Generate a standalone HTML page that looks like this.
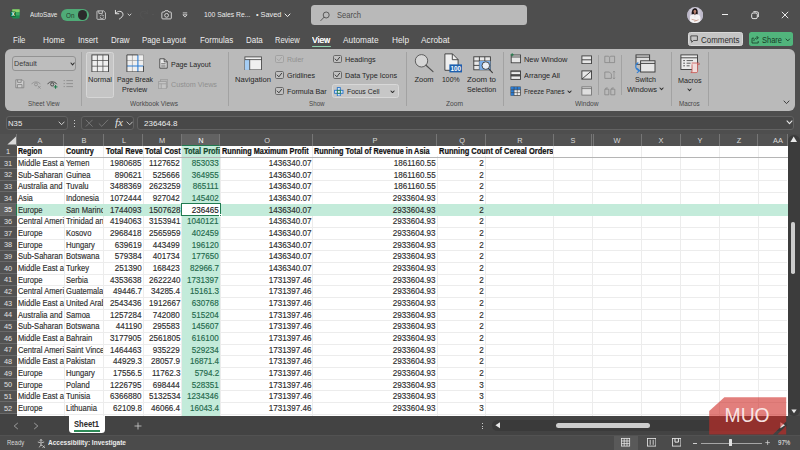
<!DOCTYPE html>
<html lang="en">
<head>
<meta charset="utf-8">
<title>100 Sales Records - Excel</title>
<style>
*{margin:0;padding:0;box-sizing:border-box}
html,body{width:800px;height:450px;overflow:hidden;background:#4e4e4e;font-family:"Liberation Sans",sans-serif;}
body{position:relative}
.abs{position:absolute}
.t{position:absolute;white-space:nowrap;line-height:1;transform-origin:0 0}
.sep{position:absolute;width:1px;background:#a2a2a2}
.cb{position:absolute;width:8.4px;height:8px;border:0.9px solid #6a6a6a;border-radius:1.7px;background:#c1c1c1}
.cb.dim{border-color:#a2a2a2;background:#bdbdbd}
.ch{position:absolute;border-right:1px solid #767676}
.rh{position:absolute;left:0;width:16.5px;background:#525252;border-bottom:1px solid #6a6a6a}
.vl{position:absolute;width:1px;background:#ececec}
.hl{position:absolute;left:16.5px;width:770.9px;height:1px;background:#ececec}
.c{position:absolute;height:11.67px;white-space:nowrap;overflow:hidden;transform-origin:0 0;font-size:8.6px;line-height:11.67px;color:#2e2e2e}
.c span{position:absolute;top:0.6px;white-space:nowrap;-webkit-text-stroke:0.15px currentColor}
</style>
</head>
<body>
<!-- ================= TITLE BAR ================= -->
<div id="title">
<svg class="abs" style="left:10px;top:9.4px" width="10" height="9.8" viewBox="0 0 11 11" ><rect x="2.4" y="0.3" width="8.3" height="10.4" rx="1.1" fill="#1f8a50"/>
<rect x="2.4" y="0.3" width="8.3" height="3.5" fill="#8fd26a"/><rect x="2.4" y="3.8" width="8.3" height="3.4" fill="#3cae63"/>
<rect x="0.2" y="2.8" width="6.2" height="6.2" rx="0.9" fill="#0f6e3b"/>
<text x="3.3" y="7.9" font-family="Liberation Sans, sans-serif" font-size="5.4" font-weight="bold" fill="#fff" text-anchor="middle">X</text></svg>
<div class="t" style="left:29.60px;top:11.40px;font-size:7.8px;color:#ececec;transform:scaleX(0.810);">AutoSave</div>
<div class="abs" style="left:61.00px;top:9.00px;width:27.60px;height:12.00px;background:#4fab77;border-radius:6px"></div>
<div class="t" style="left:66.00px;top:11.57px;font-size:7.6px;color:#1f3b2b;transform:scaleX(0.828);">On</div>
<div class="abs" style="left:77.60px;top:10.40px;width:9.80px;height:9.40px;background:#2b2b2b;border-radius:5px"></div>
<svg class="abs" style="left:95.8px;top:9.6px" width="10.4" height="10.2" viewBox="0 0 12 12" ><g fill="none" stroke="#e4e4e4" stroke-width="0.9"><path d="M1 2 a1 1 0 0 1 1-1 h6.8 l2.2 2.2 v6.8 a1 1 0 0 1 -1 1 h-8 a1 1 0 0 1 -1 -1z"/>
<path d="M3.2 1.2 v2.8 h4.2 v-2.8"/><path d="M4.6 7.4 a2.1 2.1 0 0 1 3.8 -0.6 M8.6 6 v1 h-1 M8.9 8.6 a2.1 2.1 0 0 1 -3.8 0.6 M4.9 10 v-1 h1" stroke-width="0.7"/></g></svg>
<svg class="abs" style="left:113.6px;top:9px" width="11.2" height="11" viewBox="0 0 13 13" ><g fill="none" stroke="#e8e8e8" stroke-width="1.1" stroke-linecap="round" stroke-linejoin="round"><path d="M1.6 1.6 v4 h4"/><path d="M1.9 5.3 c2.2-3.8 8.2-3.4 8.6 0.9 c0.2 2.3-1.6 3.7-4.2 5.6"/></g></svg>
<svg class="abs" style="left:126.7px;top:12.6px" width="5" height="3.6" viewBox="0 0 5 3.6" ><path d="M1 1 L2.5 2.6 L4 1" fill="none" stroke="#e0e0e0" stroke-width="0.85" stroke-linecap="round" stroke-linejoin="round"/></svg>
<svg class="abs" style="left:138.4px;top:9px" width="11.2" height="11" viewBox="0 0 13 13" ><g fill="none" stroke="#545454" stroke-width="1.1" stroke-linecap="round" stroke-linejoin="round"><path d="M11.4 1.6 v4 h-4"/><path d="M11.1 5.3 c-2.2-3.8-8.2-3.4-8.6 0.9 c-0.2 2.3 1.6 3.7 4.2 5.6"/></g></svg>
<div class="abs" style="left:152.00px;top:14.40px;width:2.40px;height:0.80px;background:#545454;"></div>
<svg class="abs" style="left:161.4px;top:10.2px" width="11.2" height="10" viewBox="0 0 12 11" ><g fill="none" stroke="#e6e6e6" stroke-width="0.95"><path d="M0.8 3.2 a1 1 0 0 1 1-1 h1.7 l0.9-1.4 h3.2 l0.9 1.4 h1.7 a1 1 0 0 1 1 1 v5.6 a1 1 0 0 1 -1 1 h-8.4 a1 1 0 0 1 -1-1z"/><circle cx="6" cy="5.9" r="2.1"/></g></svg>
<svg class="abs" style="left:181.5px;top:12px" width="6" height="6" viewBox="0 0 6 6" ><g fill="none" stroke="#e6e6e6" stroke-width="0.8"><path d="M0.8 0.9 h4.4"/><path d="M0.9 2.8 l2.1 2.3 l2.1 -2.3z"/></g></svg>
<div class="t" style="left:203.60px;top:11.31px;font-size:7.9px;color:#ececec;transform:scaleX(0.860);">100 Sales Re...</div>
<div class="t" style="left:255.60px;top:11.31px;font-size:7.9px;color:#ececec;transform:scaleX(0.929);">• Saved</div>
<svg class="abs" style="left:283.7px;top:13.1px" width="7" height="4.6" viewBox="0 0 7 4.6" ><path d="M1 1 L3.5 3.6 L6 1" fill="none" stroke="#efefef" stroke-width="1.0" stroke-linecap="round" stroke-linejoin="round"/></svg>
<div class="abs" style="left:311.40px;top:5.20px;width:215.80px;height:19.80px;background:#b9b9b9;border-radius:3.5px"></div>
<svg class="abs" style="left:319.5px;top:10.5px" width="10.5" height="10.5" viewBox="0 0 10.5 10.5" ><g fill="none" stroke="#484848" stroke-width="0.85"><circle cx="6.2" cy="4" r="3"/><path d="M4.1 6.2 L0.8 9.6" stroke-linecap="round"/></g></svg>
<div class="t" style="left:337.00px;top:10.89px;font-size:8.4px;color:#4c4c4c;transform:scaleX(0.904);">Search</div>
<svg class="abs" style="left:687.1px;top:6.9px" width="16.2" height="16.2" viewBox="0 0 16.2 16.2" ><defs><clipPath id="avc"><circle cx="8.1" cy="8.1" r="8"/></clipPath></defs>
<g clip-path="url(#avc)"><rect width="16.2" height="16.2" fill="#cdc9d8"/>
<rect x="0" y="0" width="2.6" height="16.2" fill="#b9b5c6"/><rect x="13.4" y="0" width="2.8" height="16.2" fill="#bdb9ca"/>
<path d="M4.7 7.6 C4.3 3.2 6.2 1.2 7.9 1.2 C9.9 1.2 11.2 3 10.6 7.6 Z" fill="#1d1618"/>
<ellipse cx="7.9" cy="4.5" rx="1.35" ry="1.75" fill="#b9826f"/>
<path d="M7.2 6 h1.4 v1.6 h-1.4z" fill="#a87463"/>
<path d="M3 16.2 V10 C3 8.2 5 7.4 6.8 7.3 L7.9 8.6 L9 7.3 C11 7.4 13.2 8.4 13.4 10.4 V16.2 Z" fill="#f4f2f3"/>
<path d="M4.6 12.3 l5.2 1.4 M11.6 12.8 l-4.4 1.5" stroke="#c9a293" stroke-width="0.9" fill="none"/>
<path d="M7.9 8.6 v2.2" stroke="#d9d4d6" stroke-width="0.5"/></g></svg>
<div class="abs" style="left:722.00px;top:14.00px;width:6.40px;height:0.90px;background:#efefef;"></div>
<svg class="abs" style="left:750.5px;top:11px" width="8.5" height="8.5" viewBox="0 0 8.5 8.5" ><g fill="none" stroke="#efefef" stroke-width="0.95"><rect x="0.7" y="2" width="5.6" height="5.6" rx="1.4"/><path d="M2.4 0.7 h3.2 a2.1 2.1 0 0 1 2.1 2.1 v3.2"/></g></svg>
<svg class="abs" style="left:781px;top:11px" width="8" height="8" viewBox="0 0 8 8" ><path d="M0.8 0.8 L7.2 7.2 M7.2 0.8 L0.8 7.2" fill="none" stroke="#efefef" stroke-width="0.95"/></svg>
</div>
<!-- ================= TABS ================= -->
<div id="tabs">
<div class="t" style="left:13.00px;top:35.97px;font-size:8.3px;color:#ededed;transform:scaleX(0.927);">File</div>
<div class="t" style="left:42.60px;top:35.97px;font-size:8.3px;color:#ededed;transform:scaleX(0.985);">Home</div>
<div class="t" style="left:77.60px;top:35.97px;font-size:8.3px;color:#ededed;transform:scaleX(0.963);">Insert</div>
<div class="t" style="left:111.00px;top:35.97px;font-size:8.3px;color:#ededed;transform:scaleX(0.960);">Draw</div>
<div class="t" style="left:142.40px;top:35.97px;font-size:8.3px;color:#ededed;transform:scaleX(0.944);">Page Layout</div>
<div class="t" style="left:200.00px;top:35.97px;font-size:8.3px;color:#ededed;transform:scaleX(0.960);">Formulas</div>
<div class="t" style="left:245.60px;top:35.97px;font-size:8.3px;color:#ededed;transform:scaleX(0.958);">Data</div>
<div class="t" style="left:275.00px;top:35.97px;font-size:8.3px;color:#ededed;transform:scaleX(0.904);">Review</div>
<div class="t" style="left:343.00px;top:35.97px;font-size:8.3px;color:#ededed;">Automate</div>
<div class="t" style="left:391.60px;top:35.97px;font-size:8.3px;color:#ededed;transform:scaleX(0.995);">Help</div>
<div class="t" style="left:421.00px;top:35.97px;font-size:8.3px;color:#ededed;">Acrobat</div>
<div class="t" style="left:312.40px;top:35.97px;font-size:8.3px;color:#fff;transform:scaleX(1.009);text-shadow:0.35px 0 0 #fff;">View</div>
<div class="abs" style="left:312.40px;top:45.60px;width:18.60px;height:1.60px;background:#8fd1ae;border-radius:0.8px"></div>
<div class="abs" style="left:687.60px;top:32.00px;width:55.80px;height:14.40px;background:#c5c5c5;border-radius:2.5px;border:0.6px solid #d8d8d8"></div>
<svg class="abs" style="left:690px;top:35.2px" width="8.4" height="8" viewBox="0 0 8.4 8" ><path d="M0.8 0.9 h6.6 v4.6 h-3.8 l-1.9 1.8 v-1.8 h-0.9z" fill="none" stroke="#333" stroke-width="0.8" stroke-linejoin="round"/></svg>
<div class="t" style="left:701.00px;top:35.57px;font-size:8.3px;color:#2c2c2c;transform:scaleX(0.957);">Comments</div>
<div class="abs" style="left:748.60px;top:32.00px;width:44.00px;height:14.40px;background:#51b57c;border-radius:2.5px"></div>
<svg class="abs" style="left:751px;top:34.8px" width="9" height="9" viewBox="0 0 9 9" ><g fill="none" stroke="#173a27" stroke-width="0.8" stroke-linejoin="round"><path d="M3 3.2 h-2 v4.8 h6.2 v-2"/><path d="M2.8 6 c0.3-2.3 1.8-3.2 4.2-3.2 M5.6 1 l1.8 1.8 l-1.8 1.8"/></g></svg>
<div class="t" style="left:762.00px;top:35.57px;font-size:8.3px;color:#173a27;transform:scaleX(0.903);">Share</div>
<svg class="abs" style="left:785.2px;top:37.65px" width="5.6" height="3.9" viewBox="0 0 5.6 3.9" ><path d="M1 1 L2.8 2.9 L4.6 1" fill="none" stroke="#173a27" stroke-width="0.85" stroke-linecap="round" stroke-linejoin="round"/></svg>
</div>
<!-- ================= RIBBON ================= -->
<div id="ribbon">
<div class="abs" style="left:5.00px;top:48.80px;width:790.00px;height:61.80px;background:#bababa;border-radius:6px"></div>
<div class="abs" style="left:12.40px;top:56.40px;width:63.60px;height:14.40px;background:#bdbdbd;border:0.8px solid #939393;border-radius:3px"></div>
<div class="t" style="left:14.20px;top:60.23px;font-size:8px;color:#3a3a3a;transform:scaleX(0.899);">Default</div>
<svg class="abs" style="left:70.0px;top:62.1px" width="5.2" height="3.8" viewBox="0 0 5.2 3.8" ><path d="M1 1 L2.6 2.8 L4.2 1" fill="none" stroke="#2e2e2e" stroke-width="1.1" stroke-linecap="round" stroke-linejoin="round"/></svg>
<svg class="abs" style="left:15.4px;top:79px" width="9.6" height="9.6" viewBox="0 0 9.6 9.6" ><g fill="none" stroke="#7c7c7c" stroke-width="0.8"><path d="M0.8 0.8 h6.4 l1.6 1.6 v6.4 h-8z" fill="#cdcdcd"/><path d="M2.6 0.8 v2.6 h3.6 v-2.6 M2.4 8.8 v-3.2 h4.6 v3.2"/></g></svg>
<svg class="abs" style="left:31.2px;top:79.6px" width="11" height="9.6" viewBox="0 0 11 9.6" ><g fill="none" stroke="#8c8c8c" stroke-width="0.8"><path d="M0.6 4.2 c1.6-3 7-3 8.8 0"/><circle cx="5" cy="4.4" r="1.5"/><path d="M7 6 l2.6 2.6 M9.6 6 l-2.6 2.6"/></g></svg>
<svg class="abs" style="left:47.2px;top:79.6px" width="11.4" height="9.6" viewBox="0 0 11.4 9.6" ><g fill="none" stroke="#3a3a3a" stroke-width="0.85"><path d="M0.6 4.2 c1.6-3.2 7.4-3.2 9.2 0"/><circle cx="5.2" cy="4.4" r="1.6"/><path d="M8.6 5 v3.8 M6.7 6.9 h3.8" stroke="#1e7a4a" stroke-width="1"/></g></svg>
<svg class="abs" style="left:63.4px;top:79.4px" width="10.6" height="9.6" viewBox="0 0 10.6 9.6" ><g fill="none" stroke="#8c8c8c" stroke-width="0.9"><path d="M3.4 1.6 h6.6 M3.4 4.6 h6.6 M3.4 7.6 h6.6"/><path d="M0.6 1.6 h1.3 M0.6 4.6 h1.3 M0.6 7.6 h1.3"/></g></svg>
<div class="t" style="left:28.00px;top:100.99px;font-size:7.1px;color:#474747;transform:scaleX(0.884);">Sheet View</div>
<div class="sep" style="left:80.5px;top:52px;height:54px"></div>
<div class="abs" style="left:86.40px;top:51.60px;width:28.00px;height:46.40px;background:#c5c5c5;border:0.7px solid #d6d6d6;border-radius:2.5px"></div>
<svg class="abs" style="left:91px;top:53.6px" width="18.4" height="18.8" viewBox="0 0 18.4 18.8" ><g fill="none" stroke="#3a3a3a" stroke-width="0.9"><rect x="0.9" y="0.9" width="16.6" height="17" fill="#efefef"/><path d="M6.4 0.9 v17 M11.9 0.9 v17 M0.9 6.5 h16.6 M0.9 12.2 h16.6" stroke="#4a4a4a" stroke-width="0.75"/></g></svg>
<div class="t" style="left:88.00px;top:75.65px;font-size:7.5px;color:#262626;transform:scaleX(0.993);">Normal</div>
<svg class="abs" style="left:126px;top:53.6px" width="18.4" height="18.8" viewBox="0 0 18.4 18.8" ><g fill="none" stroke="#333" stroke-width="1"><rect x="0.9" y="0.9" width="16.6" height="17" fill="#efefef" stroke="none"/><path d="M0.9 6.5 h16.6 M6.4 0.9 v17" stroke="#9a9a9a" stroke-width="0.7"/><path d="M11.9 0.9 v17 M0.9 12 h16.6" stroke="#2b7cd3" stroke-width="1.1"/><path d="M11.9 0.9 H0.9 V17.9 H17.5 V12" stroke="#3a3a3a" stroke-width="0.9"/><path d="M11.9 0.9 H17.5 V12" stroke="#8a8a8a" stroke-width="0.7"/></g></svg>
<div class="t" style="left:117.00px;top:75.65px;font-size:7.5px;color:#262626;transform:scaleX(0.918);">Page Break</div>
<div class="t" style="left:122.40px;top:85.65px;font-size:7.5px;color:#262626;transform:scaleX(0.944);">Preview</div>
<svg class="abs" style="left:158.6px;top:58.2px" width="9" height="11" viewBox="0 0 9 11" ><g fill="none" stroke="#333" stroke-width="0.8"><path d="M0.8 0.8 h4.6 l2.8 2.8 v6.6 h-7.4z" fill="#e8e8e8"/><path d="M5.2 0.8 v3 h3"/><path d="M2.2 5.6 h4.4 M2.2 7.2 h4.4 M2.2 8.8 h4.4" stroke-width="0.55"/></g></svg>
<div class="t" style="left:171.00px;top:60.65px;font-size:7.5px;color:#262626;transform:scaleX(0.940);">Page Layout</div>
<svg class="abs" style="left:158px;top:78.6px" width="10.4" height="10.4" viewBox="0 0 10.4 10.4" ><g fill="none" stroke="#999" stroke-width="0.8"><rect x="2.4" y="0.7" width="7.4" height="7.4"/><rect x="0.7" y="2.4" width="7.6" height="7.4" fill="#c4c4c4"/><path d="M0.7 4.8 h7.6 M3.2 4.8 v5"/></g></svg>
<div class="t" style="left:171.00px;top:80.65px;font-size:7.5px;color:#909090;transform:scaleX(0.962);">Custom Views</div>
<div class="t" style="left:130.00px;top:100.99px;font-size:7.1px;color:#474747;transform:scaleX(0.913);">Workbook Views</div>
<div class="sep" style="left:227.5px;top:52px;height:54px"></div>
<svg class="abs" style="left:243.6px;top:55.6px" width="18.4" height="14.8" viewBox="0 0 18.4 14.8" ><g fill="none" stroke="#444" stroke-width="0.85"><rect x="0.9" y="0.9" width="16.6" height="13" fill="#f0f0f0"/><rect x="0.9" y="3.6" width="4.8" height="10.3" fill="#a5cdf4" stroke="none"/><path d="M0.9 3.6 h16.6 M5.7 3.6 v10.3"/></g></svg>
<div class="t" style="left:235.00px;top:75.65px;font-size:7.5px;color:#262626;transform:scaleX(1.015);">Navigation</div>
<div class="cb dim" style="left:275.3px;top:54.9px"></div>
<svg class="abs" style="left:275.3px;top:54.9px" width="8.4" height="8" viewBox="0 0 8.4 8" ><path d="M2.1 4 L3.9 5.8 L6.6 2.3" fill="none" stroke="#a0a0a0" stroke-width="0.9" stroke-linecap="round" stroke-linejoin="round"/></svg>
<div class="cb" style="left:275.3px;top:71px"></div>
<svg class="abs" style="left:275.3px;top:71px" width="8.4" height="8" viewBox="0 0 8.4 8" ><path d="M2.1 4 L3.9 5.8 L6.6 2.3" fill="none" stroke="#2e2e2e" stroke-width="0.9" stroke-linecap="round" stroke-linejoin="round"/></svg>
<div class="cb" style="left:275.3px;top:87.4px"></div>
<svg class="abs" style="left:275.3px;top:87.4px" width="8.4" height="8" viewBox="0 0 8.4 8" ><path d="M2.1 4 L3.9 5.8 L6.6 2.3" fill="none" stroke="#2e2e2e" stroke-width="0.9" stroke-linecap="round" stroke-linejoin="round"/></svg>
<div class="cb" style="left:333.3px;top:54.9px"></div>
<svg class="abs" style="left:333.3px;top:54.9px" width="8.4" height="8" viewBox="0 0 8.4 8" ><path d="M2.1 4 L3.9 5.8 L6.6 2.3" fill="none" stroke="#2e2e2e" stroke-width="0.9" stroke-linecap="round" stroke-linejoin="round"/></svg>
<div class="cb" style="left:333.3px;top:71px"></div>
<svg class="abs" style="left:333.3px;top:71px" width="8.4" height="8" viewBox="0 0 8.4 8" ><path d="M2.1 4 L3.9 5.8 L6.6 2.3" fill="none" stroke="#2e2e2e" stroke-width="0.9" stroke-linecap="round" stroke-linejoin="round"/></svg>
<div class="t" style="left:287.00px;top:55.65px;font-size:7.5px;color:#909090;transform:scaleX(0.925);">Ruler</div>
<div class="t" style="left:287.00px;top:71.65px;font-size:7.5px;color:#262626;transform:scaleX(0.946);">Gridlines</div>
<div class="t" style="left:287.00px;top:87.65px;font-size:7.5px;color:#262626;transform:scaleX(0.960);">Formula Bar</div>
<div class="t" style="left:345.00px;top:55.65px;font-size:7.5px;color:#262626;transform:scaleX(0.965);">Headings</div>
<div class="t" style="left:345.00px;top:71.65px;font-size:7.5px;color:#262626;transform:scaleX(0.962);">Data Type Icons</div>
<div class="abs" style="left:332.40px;top:84.00px;width:66.60px;height:14.20px;background:#c7c7c7;border:0.7px solid #d8d8d8;border-radius:2.5px"></div>
<svg class="abs" style="left:334.4px;top:86.6px" width="9.6" height="9.6" viewBox="0 0 9.6 9.6" ><g fill="#d9e9fb" stroke="#2272c8" stroke-width="0.9"><rect x="3.3" y="0.6" width="3" height="2.9"/><rect x="0.6" y="3.3" width="2.9" height="3"/><rect x="6.1" y="3.3" width="2.9" height="3"/><rect x="3.3" y="6.1" width="3" height="2.9"/><rect x="3.3" y="3.3" width="3" height="3" fill="#e6f5ec" stroke="#1e7a4a"/></g></svg>
<div class="t" style="left:347.00px;top:87.65px;font-size:7.5px;color:#262626;transform:scaleX(0.920);">Focus Cell</div>
<svg class="abs" style="left:390.05px;top:89.55px" width="5.1" height="3.7" viewBox="0 0 5.1 3.7" ><path d="M1 1 L2.55 2.7 L4.1 1" fill="none" stroke="#2e2e2e" stroke-width="1.05" stroke-linecap="round" stroke-linejoin="round"/></svg>
<div class="t" style="left:309.00px;top:100.99px;font-size:7.1px;color:#474747;transform:scaleX(0.879);">Show</div>
<div class="sep" style="left:406.1px;top:52px;height:54px"></div>
<svg class="abs" style="left:414px;top:54px" width="21" height="20" viewBox="0 0 21 20" ><g fill="none" stroke="#505050" stroke-width="0.9"><circle cx="7.5" cy="6.8" r="6.2" fill="#d6d6d6"/><path d="M12 11.2 L19 17.6" stroke-width="1.2" stroke-linecap="round"/></g></svg>
<div class="t" style="left:414.40px;top:75.65px;font-size:7.5px;color:#262626;">Zoom</div>
<svg class="abs" style="left:443.6px;top:53.4px" width="19" height="20" viewBox="0 0 19 20" ><g fill="none" stroke="#3a3a3a" stroke-width="0.9"><path d="M0.9 0.9 h7.6 l5.6 5.6 v10.8 h-13.2z" fill="#f0f0f0"/><path d="M8.3 0.9 v5.8 h5.8"/><rect x="5.4" y="11.4" width="12.6" height="8" fill="#1d5fae" stroke="none"/><text x="6.4" y="18.3" font-family="Liberation Sans, sans-serif" font-size="7.8" font-weight="bold" fill="#fff" stroke="none" textLength="10.6" lengthAdjust="spacingAndGlyphs">100</text></g></svg>
<div class="t" style="left:442.40px;top:75.65px;font-size:7.5px;color:#262626;transform:scaleX(0.917);">100%</div>
<svg class="abs" style="left:473px;top:55.8px" width="21" height="18" viewBox="0 0 21 18" ><g fill="none" stroke="#3a3a3a" stroke-width="0.9"><rect x="0.8" y="0.8" width="16.6" height="13" fill="#e8e8e8"/><path d="M0.8 5 h16.6 M0.8 9.4 h16.6 M6.4 0.8 v13 M11.8 0.8 v13"/><rect x="6.4" y="5" width="11" height="8.8" fill="#7aaee9" stroke="none"/><circle cx="12.8" cy="9.6" r="3.8" fill="#eaeff6"/><path d="M15.6 12.6 L19.4 16.6" stroke-width="1.1" stroke-linecap="round"/></g></svg>
<div class="t" style="left:467.00px;top:75.65px;font-size:7.5px;color:#262626;transform:scaleX(1.054);">Zoom to</div>
<div class="t" style="left:467.40px;top:85.65px;font-size:7.5px;color:#262626;transform:scaleX(0.946);">Selection</div>
<div class="t" style="left:445.60px;top:100.99px;font-size:7.1px;color:#474747;transform:scaleX(0.937);">Zoom</div>
<div class="sep" style="left:502.9px;top:52px;height:54px"></div>
<svg class="abs" style="left:510px;top:53.4px" width="11.4" height="10.6" viewBox="0 0 11.4 10.6" ><g fill="none" stroke="#3a3a3a" stroke-width="0.85"><rect x="1.2" y="2" width="9.4" height="7.8" fill="#e6e6e6"/><path d="M1.2 4 h9.4"/><path d="M2.2 0.2 v3.2 M0.6 1.8 h3.2" stroke="#1e7a4a" stroke-width="0.9"/></g></svg>
<div class="t" style="left:524.00px;top:55.65px;font-size:7.5px;color:#262626;transform:scaleX(0.992);">New Window</div>
<svg class="abs" style="left:510px;top:69.6px" width="11.4" height="10.4" viewBox="0 0 11.4 10.4" ><g fill="none" stroke="#3a3a3a" stroke-width="0.9"><rect x="0.9" y="0.9" width="9.6" height="3.8" fill="#ececec"/><rect x="0.9" y="5.4" width="9.6" height="4" fill="#ececec"/><path d="M0.9 1.6 h9.6 M0.9 6.1 h9.6" stroke-width="0.7"/></g></svg>
<div class="t" style="left:524.00px;top:71.65px;font-size:7.5px;color:#262626;transform:scaleX(0.981);">Arrange All</div>
<svg class="abs" style="left:510px;top:85.6px" width="11.4" height="10.4" viewBox="0 0 11.4 10.4" ><g fill="none" stroke="#3a3a3a" stroke-width="0.7"><rect x="0.9" y="0.9" width="9.6" height="8.6" fill="#ececec"/><rect x="0.9" y="0.9" width="9.6" height="2.9" fill="#2b7cd3" stroke="none"/><rect x="0.9" y="0.9" width="3.2" height="8.6" fill="#2b7cd3" stroke="none"/><path d="M4.1 0.9 v8.6 M7.3 0.9 v8.6 M0.9 3.8 h9.6 M0.9 6.6 h9.6" stroke-width="0.55"/></g></svg>
<div class="t" style="left:524.00px;top:87.65px;font-size:7.5px;color:#262626;transform:scaleX(0.865);">Freeze Panes</div>
<svg class="abs" style="left:566.65px;top:89.55px" width="5.1" height="3.7" viewBox="0 0 5.1 3.7" ><path d="M1 1 L2.55 2.7 L4.1 1" fill="none" stroke="#2e2e2e" stroke-width="1.05" stroke-linecap="round" stroke-linejoin="round"/></svg>
<svg class="abs" style="left:581px;top:54.6px" width="11.4" height="9.6" viewBox="0 0 11.4 9.6" ><g fill="none" stroke="#3a3a3a" stroke-width="0.9"><rect x="0.9" y="0.9" width="9.6" height="7.8" fill="#e6e6e6"/><path d="M0.9 4.8 h9.6"/></g></svg>
<svg class="abs" style="left:581px;top:70.4px" width="11.4" height="10" viewBox="0 0 11.4 10" ><g fill="none" stroke="#3a3a3a" stroke-width="0.9"><rect x="0.9" y="0.9" width="9.6" height="8.2" fill="#e6e6e6"/><path d="M0.9 9.1 L10.5 0.9"/></g></svg>
<svg class="abs" style="left:581px;top:86.4px" width="11.4" height="10" viewBox="0 0 11.4 10" ><g fill="none" stroke="#6c6c6c" stroke-width="0.8"><rect x="0.9" y="0.9" width="9.6" height="8.2" fill="#dedede"/><path d="M0.9 2.6 h9.6"/></g></svg>
<div class="sep" style="left:597.5px;top:55px;height:40px"></div>
<svg class="abs" style="left:603.6px;top:55px" width="12" height="9" viewBox="0 0 12 9" ><g fill="none" stroke="#878787" stroke-width="0.8"><path d="M0.8 1.2 h3.8 l1 1 v5.4 h-4.8z M5.6 2.2 l1-1 h4 v6.4 h-5"/></g></svg>
<svg class="abs" style="left:603.6px;top:70.4px" width="12" height="10" viewBox="0 0 12 10" ><g fill="none" stroke="#878787" stroke-width="0.8"><path d="M0.8 2 h4.6 l2 2 v4.4 h-6.6z"/><path d="M10 1 v8 M9 2.4 l1-1.4 l1 1.4 M9 7.6 l1 1.4 l1-1.4" stroke-width="0.6"/></g></svg>
<svg class="abs" style="left:603.6px;top:86.8px" width="12" height="9" viewBox="0 0 12 9" ><g fill="none" stroke="#878787" stroke-width="0.8"><path d="M0.8 2.2 h4 v5.6 h-4z M6.8 2.2 h4 v5.6 h-4z M1.8 2.2 v-1.2 h2 M7.8 2.2 v-1.2 h2"/></g></svg>
<div class="sep" style="left:620.5px;top:55px;height:40px"></div>
<svg class="abs" style="left:633.4px;top:54.2px" width="23" height="20" viewBox="0 0 23 20" ><g fill="none" stroke="#3a3a3a" stroke-width="0.95"><rect x="3" y="0.9" width="13.6" height="9.4" fill="#dedede"/><path d="M3 3.2 h13.6"/><rect x="7.6" y="6.8" width="14.4" height="11.2" fill="#e6e6e6"/><path d="M7.6 9.4 h14.4"/><path d="M5 8.8 c-3.6 2.2-2.8 6.8 1.6 8 M4.4 14.6 l2.4 2.2 l-2.6 1.8" stroke="#2b7cd3" stroke-width="1.05" stroke-linecap="round"/></g></svg>
<div class="t" style="left:635.00px;top:75.65px;font-size:7.5px;color:#262626;transform:scaleX(0.950);">Switch</div>
<div class="t" style="left:627.00px;top:85.65px;font-size:7.5px;color:#262626;transform:scaleX(0.986);">Windows</div>
<svg class="abs" style="left:659.25px;top:87.15px" width="5.1" height="3.7" viewBox="0 0 5.1 3.7" ><path d="M1 1 L2.55 2.7 L4.1 1" fill="none" stroke="#2e2e2e" stroke-width="1.05" stroke-linecap="round" stroke-linejoin="round"/></svg>
<div class="t" style="left:575.00px;top:100.99px;font-size:7.1px;color:#474747;transform:scaleX(0.935);">Window</div>
<div class="sep" style="left:670.9px;top:52px;height:54px"></div>
<svg class="abs" style="left:680.4px;top:53.6px" width="21" height="20" viewBox="0 0 21 20" ><g fill="none" stroke="#3a3a3a" stroke-width="0.9"><rect x="0.9" y="0.9" width="16.6" height="14.6" fill="#ebebeb"/><path d="M0.9 3.8 h16.6"/><path d="M3.2 6.6 h1.8 M6.6 6.6 h6.4 M3.2 9.2 h1.8 M6.6 9.2 h4 M3.2 11.8 h1.8 M6.6 11.8 h3" stroke-width="0.8"/><path d="M11.6 9 h6 v8.2 a1.4 1.4 0 0 1 -1.4 1.4 h-5.4 a1.3 1.3 0 0 0 1.2 -1.4 v-6.8" fill="#f1dddc" stroke="#c9504c" stroke-width="0.8"/><path d="M17.6 9 a1.2 1.2 0 0 1 1.8 1.4 h-1.8" stroke="#c9504c" stroke-width="0.7"/></g></svg>
<div class="t" style="left:678.00px;top:76.65px;font-size:7.5px;color:#262626;transform:scaleX(0.960);">Macros</div>
<svg class="abs" style="left:687.25px;top:87.95px" width="5.1" height="3.7" viewBox="0 0 5.1 3.7" ><path d="M1 1 L2.55 2.7 L4.1 1" fill="none" stroke="#2e2e2e" stroke-width="1.05" stroke-linecap="round" stroke-linejoin="round"/></svg>
<div class="t" style="left:679.00px;top:100.99px;font-size:7.1px;color:#474747;transform:scaleX(0.885);">Macros</div>
<div class="sep" style="left:708.1px;top:52px;height:54px"></div>
<svg class="abs" style="left:782.5px;top:100.0px" width="7" height="4.6" viewBox="0 0 7 4.6" ><path d="M1 1 L3.5 3.6 L6 1" fill="none" stroke="#333" stroke-width="0.9" stroke-linecap="round" stroke-linejoin="round"/></svg>
</div>
<!-- ================= FORMULA BAR ================= -->
<div id="fbar">
<div class="abs" style="left:5.60px;top:116.00px;width:62.40px;height:14.40px;background:#484848;border:0.8px solid #626262;border-radius:3px"></div>
<div class="t" style="left:8.40px;top:119.54px;font-size:8.1px;color:#ececec;transform:scaleX(0.956);">N35</div>
<svg class="abs" style="left:57.6px;top:121.45px" width="7.2" height="4.7" viewBox="0 0 7.2 4.7" ><path d="M1 1 L3.6 3.7 L6.2 1" fill="none" stroke="#dedede" stroke-width="0.9" stroke-linecap="round" stroke-linejoin="round"/></svg>
<div class="abs" style="left:73.90px;top:120.40px;width:1.20px;height:1.10px;background:#cdcdcd;"></div>
<div class="abs" style="left:73.90px;top:123.00px;width:1.20px;height:1.10px;background:#cdcdcd;"></div>
<div class="abs" style="left:73.90px;top:125.60px;width:1.20px;height:1.10px;background:#cdcdcd;"></div>
<div class="abs" style="left:81.00px;top:116.00px;width:53.40px;height:14.40px;background:#484848;border:0.8px solid #626262;border-radius:3px"></div>
<svg class="abs" style="left:84.6px;top:119.2px" width="8.4" height="8.4" viewBox="0 0 8.4 8.4" ><path d="M0.8 0.8 L7.6 7.6 M7.6 0.8 L0.8 7.6" fill="none" stroke="#7c7c7c" stroke-width="0.9"/></svg>
<svg class="abs" style="left:98px;top:119.4px" width="11" height="8.2" viewBox="0 0 11 8.2" ><path d="M0.8 4.4 l3 3 l6.2-6.6" fill="none" stroke="#7c7c7c" stroke-width="0.9"/></svg>
<div class="t" style="left:115.00px;top:118.18px;font-size:9.6px;color:#e6e6e6;font-style:italic;font-family:'Liberation Serif',serif;transform:scaleX(1.153);">fx</div>
<svg class="abs" style="left:125.7px;top:121.4px" width="7.4" height="4.8" viewBox="0 0 7.4 4.8" ><path d="M1 1 L3.7 3.8 L6.4 1" fill="none" stroke="#cfcfcf" stroke-width="0.9" stroke-linecap="round" stroke-linejoin="round"/></svg>
<div class="abs" style="left:137.00px;top:116.00px;width:656.60px;height:14.40px;background:#484848;border:0.8px solid #626262;border-radius:3px"></div>
<div class="t" style="left:144.00px;top:119.54px;font-size:8.1px;color:#ececec;transform:scaleX(0.992);">236464.8</div>
<svg class="abs" style="left:785.5px;top:120.25px" width="7" height="4.7" viewBox="0 0 7 4.7" ><path d="M1 1 L3.5 3.7 L6 1" fill="none" stroke="#e8e8e8" stroke-width="1.1" stroke-linecap="round" stroke-linejoin="round"/></svg>
</div>
<!-- ================= GRID ================= -->
<div id="grid">
<div class="abs" style="left:0.00px;top:134.17px;width:787.50px;height:11.66px;background:#525252;"></div>
<div class="ch" style="left:16.5px;width:47.9px;top:134.17px;height:11.7px;"></div>
<div class="t" style="left:40.45px;top:136.57px;font-size:7.6px;color:#dadada;transform:scaleX(0.970);transform:translateX(-50%) scaleX(0.97);transform-origin:50% 0;">A</div>
<div class="ch" style="left:64.4px;width:39.4px;top:134.17px;height:11.7px;"></div>
<div class="t" style="left:84.10px;top:136.57px;font-size:7.6px;color:#dadada;transform:scaleX(0.970);transform:translateX(-50%) scaleX(0.97);transform-origin:50% 0;">B</div>
<div class="ch" style="left:103.8px;width:39.5px;top:134.17px;height:11.7px;"></div>
<div class="t" style="left:123.55px;top:136.57px;font-size:7.6px;color:#dadada;transform:scaleX(0.970);transform:translateX(-50%) scaleX(0.97);transform-origin:50% 0;">L</div>
<div class="ch" style="left:143.3px;width:38.3px;top:134.17px;height:11.7px;"></div>
<div class="t" style="left:162.45px;top:136.57px;font-size:7.6px;color:#dadada;transform:scaleX(0.970);transform:translateX(-50%) scaleX(0.97);transform-origin:50% 0;">M</div>
<div class="ch" style="left:181.6px;width:38.8px;top:134.17px;height:11.7px;background:#626262;border-bottom:1.2px solid #217a50;"></div>
<div class="t" style="left:201.00px;top:136.57px;font-size:7.6px;color:#fff;transform:scaleX(0.970);transform:translateX(-50%) scaleX(0.97);transform-origin:50% 0;">N</div>
<div class="ch" style="left:220.4px;width:92.2px;top:134.17px;height:11.7px;"></div>
<div class="t" style="left:266.50px;top:136.57px;font-size:7.6px;color:#dadada;transform:scaleX(0.970);transform:translateX(-50%) scaleX(0.97);transform-origin:50% 0;">O</div>
<div class="ch" style="left:312.6px;width:124.7px;top:134.17px;height:11.7px;"></div>
<div class="t" style="left:374.95px;top:136.57px;font-size:7.6px;color:#dadada;transform:scaleX(0.970);transform:translateX(-50%) scaleX(0.97);transform-origin:50% 0;">P</div>
<div class="ch" style="left:437.3px;width:48.4px;top:134.17px;height:11.7px;"></div>
<div class="t" style="left:461.50px;top:136.57px;font-size:7.6px;color:#dadada;transform:scaleX(0.970);transform:translateX(-50%) scaleX(0.97);transform-origin:50% 0;">Q</div>
<div class="ch" style="left:485.7px;width:67.9px;top:134.17px;height:11.7px;"></div>
<div class="t" style="left:519.65px;top:136.57px;font-size:7.6px;color:#dadada;transform:scaleX(0.970);transform:translateX(-50%) scaleX(0.97);transform-origin:50% 0;">R</div>
<div class="ch" style="left:553.6px;width:38.4px;top:134.17px;height:11.7px;"></div>
<div class="t" style="left:572.80px;top:136.57px;font-size:7.6px;color:#dadada;transform:scaleX(0.970);transform:translateX(-50%) scaleX(0.97);transform-origin:50% 0;">S</div>
<div class="ch" style="left:592.0px;width:49.6px;top:134.17px;height:11.7px;"></div>
<div class="t" style="left:616.80px;top:136.57px;font-size:7.6px;color:#dadada;transform:scaleX(0.970);transform:translateX(-50%) scaleX(0.97);transform-origin:50% 0;">W</div>
<div class="ch" style="left:641.6px;width:39.0px;top:134.17px;height:11.7px;"></div>
<div class="t" style="left:661.10px;top:136.57px;font-size:7.6px;color:#dadada;transform:scaleX(0.970);transform:translateX(-50%) scaleX(0.97);transform-origin:50% 0;">X</div>
<div class="ch" style="left:680.6px;width:39.0px;top:134.17px;height:11.7px;"></div>
<div class="t" style="left:700.10px;top:136.57px;font-size:7.6px;color:#dadada;transform:scaleX(0.970);transform:translateX(-50%) scaleX(0.97);transform-origin:50% 0;">Y</div>
<div class="ch" style="left:719.6px;width:38.9px;top:134.17px;height:11.7px;"></div>
<div class="t" style="left:739.05px;top:136.57px;font-size:7.6px;color:#dadada;transform:scaleX(0.970);transform:translateX(-50%) scaleX(0.97);transform-origin:50% 0;">Z</div>
<div class="ch" style="left:758.5px;width:29.0px;top:134.17px;height:11.7px;"></div>
<div class="t" style="left:777.60px;top:136.57px;font-size:7.6px;color:#dadada;transform:scaleX(0.970);transform:translateX(-50%) scaleX(0.97);transform-origin:50% 0;">AA</div>
<div class="abs" style="left:15.7px;top:134.17px;width:1px;height:11.660000000000025px;background:#767676"></div>
<div class="abs" style="left:592.6px;top:134.17px;width:1px;height:11.660000000000025px;background:#767676"></div>
<svg class="abs" style="left:6.6px;top:136.2px" width="10" height="9" viewBox="0 0 10 9" ><polygon points="0.4,8.4 9,8.4 9,0.4" fill="#dadada"/></svg>
<div class="abs" style="left:16.50px;top:145.83px;width:771.00px;height:269.97px;background:#fff;"></div>
<div class="vl" style="left:63.9px;top:145.83px;height:270.0px"></div>
<div class="vl" style="left:103.3px;top:145.83px;height:270.0px"></div>
<div class="vl" style="left:142.8px;top:145.83px;height:270.0px"></div>
<div class="vl" style="left:181.1px;top:145.83px;height:270.0px"></div>
<div class="vl" style="left:219.9px;top:145.83px;height:270.0px"></div>
<div class="vl" style="left:312.1px;top:145.83px;height:270.0px"></div>
<div class="vl" style="left:436.8px;top:145.83px;height:270.0px"></div>
<div class="vl" style="left:485.2px;top:145.83px;height:270.0px"></div>
<div class="vl" style="left:553.1px;top:145.83px;height:270.0px"></div>
<div class="vl" style="left:591.5px;top:145.83px;height:270.0px"></div>
<div class="vl" style="left:641.1px;top:145.83px;height:270.0px"></div>
<div class="vl" style="left:680.1px;top:145.83px;height:270.0px"></div>
<div class="vl" style="left:719.1px;top:145.83px;height:270.0px"></div>
<div class="vl" style="left:758.0px;top:145.83px;height:270.0px"></div>
<div class="hl" style="top:157.00px"></div>
<div class="hl" style="top:168.66px"></div>
<div class="hl" style="top:180.33px"></div>
<div class="hl" style="top:192.00px"></div>
<div class="hl" style="top:203.67px"></div>
<div class="hl" style="top:215.33px"></div>
<div class="hl" style="top:227.00px"></div>
<div class="hl" style="top:238.67px"></div>
<div class="hl" style="top:250.33px"></div>
<div class="hl" style="top:262.00px"></div>
<div class="hl" style="top:273.67px"></div>
<div class="hl" style="top:285.33px"></div>
<div class="hl" style="top:297.00px"></div>
<div class="hl" style="top:308.67px"></div>
<div class="hl" style="top:320.34px"></div>
<div class="hl" style="top:332.00px"></div>
<div class="hl" style="top:343.67px"></div>
<div class="hl" style="top:355.34px"></div>
<div class="hl" style="top:367.00px"></div>
<div class="hl" style="top:378.67px"></div>
<div class="hl" style="top:390.34px"></div>
<div class="hl" style="top:402.00px"></div>
<div class="hl" style="top:413.67px"></div>
<div class="abs" style="left:181.60px;top:145.83px;width:38.30px;height:269.97px;background:#c3ebda;"></div>
<div class="abs" style="left:16.50px;top:204.17px;width:771.00px;height:11.67px;background:#c3ebda;"></div>
<div class="abs" style="left:16.50px;top:156.80px;width:771.00px;height:1.00px;background:#b5b5b5;"></div>
<div class="abs" style="left:0.00px;top:145.83px;width:16.50px;height:268.34px;background:#525252;"></div>
<div class="rh" style="top:145.83px;height:11.67px;"></div>
<div class="t" style="left:8.20px;top:147.96px;font-size:8.0px;color:#e0e0e0;transform:scaleX(0.920);transform:translateX(-50%) scaleX(0.92);transform-origin:50% 0;">1</div>
<div class="rh" style="top:157.50px;height:11.67px;"></div>
<div class="t" style="left:8.20px;top:159.63px;font-size:8.0px;color:#e0e0e0;transform:scaleX(0.920);transform:translateX(-50%) scaleX(0.92);transform-origin:50% 0;">31</div>
<div class="rh" style="top:169.16px;height:11.67px;"></div>
<div class="t" style="left:8.20px;top:171.29px;font-size:8.0px;color:#e0e0e0;transform:scaleX(0.920);transform:translateX(-50%) scaleX(0.92);transform-origin:50% 0;">32</div>
<div class="rh" style="top:180.83px;height:11.67px;"></div>
<div class="t" style="left:8.20px;top:182.96px;font-size:8.0px;color:#e0e0e0;transform:scaleX(0.920);transform:translateX(-50%) scaleX(0.92);transform-origin:50% 0;">33</div>
<div class="rh" style="top:192.50px;height:11.67px;"></div>
<div class="t" style="left:8.20px;top:194.63px;font-size:8.0px;color:#e0e0e0;transform:scaleX(0.920);transform:translateX(-50%) scaleX(0.92);transform-origin:50% 0;">34</div>
<div class="rh" style="top:204.17px;height:11.67px;background:#626262;border-right:1.2px solid #217a50;"></div>
<div class="t" style="left:8.20px;top:206.29px;font-size:8.0px;color:#fff;transform:scaleX(0.920);transform:translateX(-50%) scaleX(0.92);transform-origin:50% 0;">35</div>
<div class="rh" style="top:215.83px;height:11.67px;"></div>
<div class="t" style="left:8.20px;top:217.96px;font-size:8.0px;color:#e0e0e0;transform:scaleX(0.920);transform:translateX(-50%) scaleX(0.92);transform-origin:50% 0;">36</div>
<div class="rh" style="top:227.50px;height:11.67px;"></div>
<div class="t" style="left:8.20px;top:229.63px;font-size:8.0px;color:#e0e0e0;transform:scaleX(0.920);transform:translateX(-50%) scaleX(0.92);transform-origin:50% 0;">37</div>
<div class="rh" style="top:239.17px;height:11.67px;"></div>
<div class="t" style="left:8.20px;top:241.29px;font-size:8.0px;color:#e0e0e0;transform:scaleX(0.920);transform:translateX(-50%) scaleX(0.92);transform-origin:50% 0;">38</div>
<div class="rh" style="top:250.83px;height:11.67px;"></div>
<div class="t" style="left:8.20px;top:252.96px;font-size:8.0px;color:#e0e0e0;transform:scaleX(0.920);transform:translateX(-50%) scaleX(0.92);transform-origin:50% 0;">39</div>
<div class="rh" style="top:262.50px;height:11.67px;"></div>
<div class="t" style="left:8.20px;top:264.63px;font-size:8.0px;color:#e0e0e0;transform:scaleX(0.920);transform:translateX(-50%) scaleX(0.92);transform-origin:50% 0;">40</div>
<div class="rh" style="top:274.17px;height:11.67px;"></div>
<div class="t" style="left:8.20px;top:276.30px;font-size:8.0px;color:#e0e0e0;transform:scaleX(0.920);transform:translateX(-50%) scaleX(0.92);transform-origin:50% 0;">41</div>
<div class="rh" style="top:285.83px;height:11.67px;"></div>
<div class="t" style="left:8.20px;top:287.96px;font-size:8.0px;color:#e0e0e0;transform:scaleX(0.920);transform:translateX(-50%) scaleX(0.92);transform-origin:50% 0;">42</div>
<div class="rh" style="top:297.50px;height:11.67px;"></div>
<div class="t" style="left:8.20px;top:299.63px;font-size:8.0px;color:#e0e0e0;transform:scaleX(0.920);transform:translateX(-50%) scaleX(0.92);transform-origin:50% 0;">43</div>
<div class="rh" style="top:309.17px;height:11.67px;"></div>
<div class="t" style="left:8.20px;top:311.30px;font-size:8.0px;color:#e0e0e0;transform:scaleX(0.920);transform:translateX(-50%) scaleX(0.92);transform-origin:50% 0;">44</div>
<div class="rh" style="top:320.84px;height:11.67px;"></div>
<div class="t" style="left:8.20px;top:322.96px;font-size:8.0px;color:#e0e0e0;transform:scaleX(0.920);transform:translateX(-50%) scaleX(0.92);transform-origin:50% 0;">45</div>
<div class="rh" style="top:332.50px;height:11.67px;"></div>
<div class="t" style="left:8.20px;top:334.63px;font-size:8.0px;color:#e0e0e0;transform:scaleX(0.920);transform:translateX(-50%) scaleX(0.92);transform-origin:50% 0;">46</div>
<div class="rh" style="top:344.17px;height:11.67px;"></div>
<div class="t" style="left:8.20px;top:346.30px;font-size:8.0px;color:#e0e0e0;transform:scaleX(0.920);transform:translateX(-50%) scaleX(0.92);transform-origin:50% 0;">47</div>
<div class="rh" style="top:355.84px;height:11.67px;"></div>
<div class="t" style="left:8.20px;top:357.96px;font-size:8.0px;color:#e0e0e0;transform:scaleX(0.920);transform:translateX(-50%) scaleX(0.92);transform-origin:50% 0;">48</div>
<div class="rh" style="top:367.50px;height:11.67px;"></div>
<div class="t" style="left:8.20px;top:369.63px;font-size:8.0px;color:#e0e0e0;transform:scaleX(0.920);transform:translateX(-50%) scaleX(0.92);transform-origin:50% 0;">49</div>
<div class="rh" style="top:379.17px;height:11.67px;"></div>
<div class="t" style="left:8.20px;top:381.30px;font-size:8.0px;color:#e0e0e0;transform:scaleX(0.920);transform:translateX(-50%) scaleX(0.92);transform-origin:50% 0;">50</div>
<div class="rh" style="top:390.84px;height:11.67px;"></div>
<div class="t" style="left:8.20px;top:392.96px;font-size:8.0px;color:#e0e0e0;transform:scaleX(0.920);transform:translateX(-50%) scaleX(0.92);transform-origin:50% 0;">51</div>
<div class="rh" style="top:402.50px;height:11.67px;"></div>
<div class="t" style="left:8.20px;top:404.63px;font-size:8.0px;color:#e0e0e0;transform:scaleX(0.920);transform:translateX(-50%) scaleX(0.92);transform-origin:50% 0;">52</div>
<div class="c" style="left:16.5px;width:47.4px;top:145.83px;"><span style="font-weight:bold;-webkit-text-stroke:0.22px currentColor;color:#111;left:1.5px;transform:scaleX(0.824);transform-origin:0 0;">Region</span></div>
<div class="c" style="left:64.4px;width:38.9px;top:145.83px;"><span style="font-weight:bold;-webkit-text-stroke:0.22px currentColor;color:#111;left:1.9px;transform:scaleX(0.844);transform-origin:0 0;">Country</span></div>
<div class="c" style="left:103.8px;width:39.0px;top:145.83px;"><span style="font-weight:bold;-webkit-text-stroke:0.22px currentColor;color:#111;left:2.4px;transform:scaleX(0.863);transform-origin:0 0;">Total Revenue</span></div>
<div class="c" style="left:143.3px;width:37.8px;top:145.83px;"><span style="font-weight:bold;-webkit-text-stroke:0.22px currentColor;color:#111;left:1.6px;transform:scaleX(0.863);transform-origin:0 0;">Total Cost</span></div>
<div class="c" style="left:181.6px;width:38.3px;top:145.83px;"><span style="font-weight:bold;-webkit-text-stroke:0.22px currentColor;color:#14472d;left:2.6px;transform:scaleX(0.863);transform-origin:0 0;">Total Profit</span></div>
<div class="c" style="left:220.4px;width:91.7px;top:145.83px;"><span style="font-weight:bold;-webkit-text-stroke:0.22px currentColor;color:#111;left:1.9px;transform:scaleX(0.852);transform-origin:0 0;">Running Maximum Profit</span></div>
<div class="c" style="left:312.6px;width:124.2px;top:145.83px;"><span style="font-weight:bold;-webkit-text-stroke:0.22px currentColor;color:#111;left:1.9px;transform:scaleX(0.849);transform-origin:0 0;">Running Total of Revenue in Asia</span></div>
<div class="c" style="left:437.3px;width:115.8px;top:145.83px;background:#fff;height:10.67px;"><span style="font-weight:bold;-webkit-text-stroke:0.22px currentColor;color:#111;left:1.6px;transform:scaleX(0.869);transform-origin:0 0;">Running Count of Cereal Orders</span></div>
<div class="c" style="left:16.5px;width:47.4px;top:157.50px;"><span style="left:1.5px;transform:scaleX(0.885);transform-origin:0 0;">Middle East a</span></div>
<div class="c" style="left:64.4px;width:38.9px;top:157.50px;"><span style="left:1.9px;transform:scaleX(0.885);transform-origin:0 0;">Yemen</span></div>
<div class="c" style="left:103.8px;width:39.0px;top:157.50px;"><span style="right:1.0px;transform:scaleX(0.938);transform-origin:100% 0;">1980685</span></div>
<div class="c" style="left:143.3px;width:37.8px;top:157.50px;"><span style="right:1.0px;transform:scaleX(0.938);transform-origin:100% 0;">1127652</span></div>
<div class="c" style="left:181.6px;width:38.3px;top:157.50px;"><span style="color:#246a4c;right:1.0px;transform:scaleX(0.938);transform-origin:100% 0;">853033</span></div>
<div class="c" style="left:220.4px;width:91.7px;top:157.50px;"><span style="right:1.0px;transform:scaleX(0.938);transform-origin:100% 0;">1436340.07</span></div>
<div class="c" style="left:312.6px;width:124.2px;top:157.50px;"><span style="right:1.0px;transform:scaleX(0.938);transform-origin:100% 0;">1861160.55</span></div>
<div class="c" style="left:437.3px;width:47.9px;top:157.50px;"><span style="right:1.0px;transform:scaleX(0.938);transform-origin:100% 0;">2</span></div>
<div class="c" style="left:16.5px;width:47.4px;top:169.16px;"><span style="left:1.5px;transform:scaleX(0.885);transform-origin:0 0;">Sub-Saharan</span></div>
<div class="c" style="left:64.4px;width:38.9px;top:169.16px;"><span style="left:1.9px;transform:scaleX(0.885);transform-origin:0 0;">Guinea</span></div>
<div class="c" style="left:103.8px;width:39.0px;top:169.16px;"><span style="right:1.0px;transform:scaleX(0.938);transform-origin:100% 0;">890621</span></div>
<div class="c" style="left:143.3px;width:37.8px;top:169.16px;"><span style="right:1.0px;transform:scaleX(0.938);transform-origin:100% 0;">525666</span></div>
<div class="c" style="left:181.6px;width:38.3px;top:169.16px;"><span style="color:#246a4c;right:1.0px;transform:scaleX(0.938);transform-origin:100% 0;">364955</span></div>
<div class="c" style="left:220.4px;width:91.7px;top:169.16px;"><span style="right:1.0px;transform:scaleX(0.938);transform-origin:100% 0;">1436340.07</span></div>
<div class="c" style="left:312.6px;width:124.2px;top:169.16px;"><span style="right:1.0px;transform:scaleX(0.938);transform-origin:100% 0;">1861160.55</span></div>
<div class="c" style="left:437.3px;width:47.9px;top:169.16px;"><span style="right:1.0px;transform:scaleX(0.938);transform-origin:100% 0;">2</span></div>
<div class="c" style="left:16.5px;width:47.4px;top:180.83px;"><span style="left:1.5px;transform:scaleX(0.885);transform-origin:0 0;">Australia and</span></div>
<div class="c" style="left:64.4px;width:38.9px;top:180.83px;"><span style="left:1.9px;transform:scaleX(0.885);transform-origin:0 0;">Tuvalu</span></div>
<div class="c" style="left:103.8px;width:39.0px;top:180.83px;"><span style="right:1.0px;transform:scaleX(0.938);transform-origin:100% 0;">3488369</span></div>
<div class="c" style="left:143.3px;width:37.8px;top:180.83px;"><span style="right:1.0px;transform:scaleX(0.938);transform-origin:100% 0;">2623259</span></div>
<div class="c" style="left:181.6px;width:38.3px;top:180.83px;"><span style="color:#246a4c;right:1.0px;transform:scaleX(0.938);transform-origin:100% 0;">865111</span></div>
<div class="c" style="left:220.4px;width:91.7px;top:180.83px;"><span style="right:1.0px;transform:scaleX(0.938);transform-origin:100% 0;">1436340.07</span></div>
<div class="c" style="left:312.6px;width:124.2px;top:180.83px;"><span style="right:1.0px;transform:scaleX(0.938);transform-origin:100% 0;">1861160.55</span></div>
<div class="c" style="left:437.3px;width:47.9px;top:180.83px;"><span style="right:1.0px;transform:scaleX(0.938);transform-origin:100% 0;">2</span></div>
<div class="c" style="left:16.5px;width:47.4px;top:192.50px;"><span style="left:1.5px;transform:scaleX(0.885);transform-origin:0 0;">Asia</span></div>
<div class="c" style="left:64.4px;width:38.9px;top:192.50px;"><span style="left:1.9px;transform:scaleX(0.885);transform-origin:0 0;">Indonesia</span></div>
<div class="c" style="left:103.8px;width:39.0px;top:192.50px;"><span style="right:1.0px;transform:scaleX(0.938);transform-origin:100% 0;">1072444</span></div>
<div class="c" style="left:143.3px;width:37.8px;top:192.50px;"><span style="right:1.0px;transform:scaleX(0.938);transform-origin:100% 0;">927042</span></div>
<div class="c" style="left:181.6px;width:38.3px;top:192.50px;"><span style="color:#246a4c;right:1.0px;transform:scaleX(0.938);transform-origin:100% 0;">145402</span></div>
<div class="c" style="left:220.4px;width:91.7px;top:192.50px;"><span style="right:1.0px;transform:scaleX(0.938);transform-origin:100% 0;">1436340.07</span></div>
<div class="c" style="left:312.6px;width:124.2px;top:192.50px;"><span style="right:1.0px;transform:scaleX(0.938);transform-origin:100% 0;">2933604.93</span></div>
<div class="c" style="left:437.3px;width:47.9px;top:192.50px;"><span style="right:1.0px;transform:scaleX(0.938);transform-origin:100% 0;">2</span></div>
<div class="c" style="left:16.5px;width:47.4px;top:204.17px;"><span style="left:1.5px;transform:scaleX(0.885);transform-origin:0 0;">Europe</span></div>
<div class="c" style="left:64.4px;width:38.9px;top:204.17px;"><span style="left:1.9px;transform:scaleX(0.885);transform-origin:0 0;">San Marino</span></div>
<div class="c" style="left:103.8px;width:39.0px;top:204.17px;"><span style="right:1.0px;transform:scaleX(0.938);transform-origin:100% 0;">1744093</span></div>
<div class="c" style="left:143.3px;width:37.8px;top:204.17px;"><span style="right:1.0px;transform:scaleX(0.938);transform-origin:100% 0;">1507628</span></div>
<div class="c" style="left:220.4px;width:91.7px;top:204.17px;"><span style="right:1.0px;transform:scaleX(0.938);transform-origin:100% 0;">1436340.07</span></div>
<div class="c" style="left:312.6px;width:124.2px;top:204.17px;"><span style="right:1.0px;transform:scaleX(0.938);transform-origin:100% 0;">2933604.93</span></div>
<div class="c" style="left:437.3px;width:47.9px;top:204.17px;"><span style="right:1.0px;transform:scaleX(0.938);transform-origin:100% 0;">2</span></div>
<div class="c" style="left:16.5px;width:47.4px;top:215.83px;"><span style="left:1.5px;transform:scaleX(0.885);transform-origin:0 0;">Central America</span></div>
<div class="c" style="left:64.4px;width:38.9px;top:215.83px;"><span style="left:1.9px;transform:scaleX(0.885);transform-origin:0 0;">Trinidad and</span></div>
<div class="c" style="left:103.8px;width:39.0px;top:215.83px;"><span style="right:1.0px;transform:scaleX(0.938);transform-origin:100% 0;">4194063</span></div>
<div class="c" style="left:143.3px;width:37.8px;top:215.83px;"><span style="right:1.0px;transform:scaleX(0.938);transform-origin:100% 0;">3153941</span></div>
<div class="c" style="left:181.6px;width:38.3px;top:215.83px;"><span style="color:#246a4c;right:1.0px;transform:scaleX(0.938);transform-origin:100% 0;">1040121</span></div>
<div class="c" style="left:220.4px;width:91.7px;top:215.83px;"><span style="right:1.0px;transform:scaleX(0.938);transform-origin:100% 0;">1436340.07</span></div>
<div class="c" style="left:312.6px;width:124.2px;top:215.83px;"><span style="right:1.0px;transform:scaleX(0.938);transform-origin:100% 0;">2933604.93</span></div>
<div class="c" style="left:437.3px;width:47.9px;top:215.83px;"><span style="right:1.0px;transform:scaleX(0.938);transform-origin:100% 0;">2</span></div>
<div class="c" style="left:16.5px;width:47.4px;top:227.50px;"><span style="left:1.5px;transform:scaleX(0.885);transform-origin:0 0;">Europe</span></div>
<div class="c" style="left:64.4px;width:38.9px;top:227.50px;"><span style="left:1.9px;transform:scaleX(0.885);transform-origin:0 0;">Kosovo</span></div>
<div class="c" style="left:103.8px;width:39.0px;top:227.50px;"><span style="right:1.0px;transform:scaleX(0.938);transform-origin:100% 0;">2968418</span></div>
<div class="c" style="left:143.3px;width:37.8px;top:227.50px;"><span style="right:1.0px;transform:scaleX(0.938);transform-origin:100% 0;">2565959</span></div>
<div class="c" style="left:181.6px;width:38.3px;top:227.50px;"><span style="color:#246a4c;right:1.0px;transform:scaleX(0.938);transform-origin:100% 0;">402459</span></div>
<div class="c" style="left:220.4px;width:91.7px;top:227.50px;"><span style="right:1.0px;transform:scaleX(0.938);transform-origin:100% 0;">1436340.07</span></div>
<div class="c" style="left:312.6px;width:124.2px;top:227.50px;"><span style="right:1.0px;transform:scaleX(0.938);transform-origin:100% 0;">2933604.93</span></div>
<div class="c" style="left:437.3px;width:47.9px;top:227.50px;"><span style="right:1.0px;transform:scaleX(0.938);transform-origin:100% 0;">2</span></div>
<div class="c" style="left:16.5px;width:47.4px;top:239.17px;"><span style="left:1.5px;transform:scaleX(0.885);transform-origin:0 0;">Europe</span></div>
<div class="c" style="left:64.4px;width:38.9px;top:239.17px;"><span style="left:1.9px;transform:scaleX(0.885);transform-origin:0 0;">Hungary</span></div>
<div class="c" style="left:103.8px;width:39.0px;top:239.17px;"><span style="right:1.0px;transform:scaleX(0.938);transform-origin:100% 0;">639619</span></div>
<div class="c" style="left:143.3px;width:37.8px;top:239.17px;"><span style="right:1.0px;transform:scaleX(0.938);transform-origin:100% 0;">443499</span></div>
<div class="c" style="left:181.6px;width:38.3px;top:239.17px;"><span style="color:#246a4c;right:1.0px;transform:scaleX(0.938);transform-origin:100% 0;">196120</span></div>
<div class="c" style="left:220.4px;width:91.7px;top:239.17px;"><span style="right:1.0px;transform:scaleX(0.938);transform-origin:100% 0;">1436340.07</span></div>
<div class="c" style="left:312.6px;width:124.2px;top:239.17px;"><span style="right:1.0px;transform:scaleX(0.938);transform-origin:100% 0;">2933604.93</span></div>
<div class="c" style="left:437.3px;width:47.9px;top:239.17px;"><span style="right:1.0px;transform:scaleX(0.938);transform-origin:100% 0;">2</span></div>
<div class="c" style="left:16.5px;width:47.4px;top:250.83px;"><span style="left:1.5px;transform:scaleX(0.885);transform-origin:0 0;">Sub-Saharan</span></div>
<div class="c" style="left:64.4px;width:38.9px;top:250.83px;"><span style="left:1.9px;transform:scaleX(0.885);transform-origin:0 0;">Botswana</span></div>
<div class="c" style="left:103.8px;width:39.0px;top:250.83px;"><span style="right:1.0px;transform:scaleX(0.938);transform-origin:100% 0;">579384</span></div>
<div class="c" style="left:143.3px;width:37.8px;top:250.83px;"><span style="right:1.0px;transform:scaleX(0.938);transform-origin:100% 0;">401734</span></div>
<div class="c" style="left:181.6px;width:38.3px;top:250.83px;"><span style="color:#246a4c;right:1.0px;transform:scaleX(0.938);transform-origin:100% 0;">177650</span></div>
<div class="c" style="left:220.4px;width:91.7px;top:250.83px;"><span style="right:1.0px;transform:scaleX(0.938);transform-origin:100% 0;">1436340.07</span></div>
<div class="c" style="left:312.6px;width:124.2px;top:250.83px;"><span style="right:1.0px;transform:scaleX(0.938);transform-origin:100% 0;">2933604.93</span></div>
<div class="c" style="left:437.3px;width:47.9px;top:250.83px;"><span style="right:1.0px;transform:scaleX(0.938);transform-origin:100% 0;">2</span></div>
<div class="c" style="left:16.5px;width:47.4px;top:262.50px;"><span style="left:1.5px;transform:scaleX(0.885);transform-origin:0 0;">Middle East a</span></div>
<div class="c" style="left:64.4px;width:38.9px;top:262.50px;"><span style="left:1.9px;transform:scaleX(0.885);transform-origin:0 0;">Turkey</span></div>
<div class="c" style="left:103.8px;width:39.0px;top:262.50px;"><span style="right:1.0px;transform:scaleX(0.938);transform-origin:100% 0;">251390</span></div>
<div class="c" style="left:143.3px;width:37.8px;top:262.50px;"><span style="right:1.0px;transform:scaleX(0.938);transform-origin:100% 0;">168423</span></div>
<div class="c" style="left:181.6px;width:38.3px;top:262.50px;"><span style="color:#246a4c;right:1.0px;transform:scaleX(0.938);transform-origin:100% 0;">82966.7</span></div>
<div class="c" style="left:220.4px;width:91.7px;top:262.50px;"><span style="right:1.0px;transform:scaleX(0.938);transform-origin:100% 0;">1436340.07</span></div>
<div class="c" style="left:312.6px;width:124.2px;top:262.50px;"><span style="right:1.0px;transform:scaleX(0.938);transform-origin:100% 0;">2933604.93</span></div>
<div class="c" style="left:437.3px;width:47.9px;top:262.50px;"><span style="right:1.0px;transform:scaleX(0.938);transform-origin:100% 0;">2</span></div>
<div class="c" style="left:16.5px;width:47.4px;top:274.17px;"><span style="left:1.5px;transform:scaleX(0.885);transform-origin:0 0;">Europe</span></div>
<div class="c" style="left:64.4px;width:38.9px;top:274.17px;"><span style="left:1.9px;transform:scaleX(0.885);transform-origin:0 0;">Serbia</span></div>
<div class="c" style="left:103.8px;width:39.0px;top:274.17px;"><span style="right:1.0px;transform:scaleX(0.938);transform-origin:100% 0;">4353638</span></div>
<div class="c" style="left:143.3px;width:37.8px;top:274.17px;"><span style="right:1.0px;transform:scaleX(0.938);transform-origin:100% 0;">2622240</span></div>
<div class="c" style="left:181.6px;width:38.3px;top:274.17px;"><span style="color:#246a4c;right:1.0px;transform:scaleX(0.938);transform-origin:100% 0;">1731397</span></div>
<div class="c" style="left:220.4px;width:91.7px;top:274.17px;"><span style="right:1.0px;transform:scaleX(0.938);transform-origin:100% 0;">1731397.46</span></div>
<div class="c" style="left:312.6px;width:124.2px;top:274.17px;"><span style="right:1.0px;transform:scaleX(0.938);transform-origin:100% 0;">2933604.93</span></div>
<div class="c" style="left:437.3px;width:47.9px;top:274.17px;"><span style="right:1.0px;transform:scaleX(0.938);transform-origin:100% 0;">2</span></div>
<div class="c" style="left:16.5px;width:47.4px;top:285.83px;"><span style="left:1.5px;transform:scaleX(0.885);transform-origin:0 0;">Central America</span></div>
<div class="c" style="left:64.4px;width:38.9px;top:285.83px;"><span style="left:1.9px;transform:scaleX(0.885);transform-origin:0 0;">Guatemala</span></div>
<div class="c" style="left:103.8px;width:39.0px;top:285.83px;"><span style="right:1.0px;transform:scaleX(0.938);transform-origin:100% 0;">49446.7</span></div>
<div class="c" style="left:143.3px;width:37.8px;top:285.83px;"><span style="right:1.0px;transform:scaleX(0.938);transform-origin:100% 0;">34285.4</span></div>
<div class="c" style="left:181.6px;width:38.3px;top:285.83px;"><span style="color:#246a4c;right:1.0px;transform:scaleX(0.938);transform-origin:100% 0;">15161.3</span></div>
<div class="c" style="left:220.4px;width:91.7px;top:285.83px;"><span style="right:1.0px;transform:scaleX(0.938);transform-origin:100% 0;">1731397.46</span></div>
<div class="c" style="left:312.6px;width:124.2px;top:285.83px;"><span style="right:1.0px;transform:scaleX(0.938);transform-origin:100% 0;">2933604.93</span></div>
<div class="c" style="left:437.3px;width:47.9px;top:285.83px;"><span style="right:1.0px;transform:scaleX(0.938);transform-origin:100% 0;">2</span></div>
<div class="c" style="left:16.5px;width:47.4px;top:297.50px;"><span style="left:1.5px;transform:scaleX(0.885);transform-origin:0 0;">Middle East a</span></div>
<div class="c" style="left:64.4px;width:38.9px;top:297.50px;"><span style="left:1.9px;transform:scaleX(0.885);transform-origin:0 0;">United Arab</span></div>
<div class="c" style="left:103.8px;width:39.0px;top:297.50px;"><span style="right:1.0px;transform:scaleX(0.938);transform-origin:100% 0;">2543436</span></div>
<div class="c" style="left:143.3px;width:37.8px;top:297.50px;"><span style="right:1.0px;transform:scaleX(0.938);transform-origin:100% 0;">1912667</span></div>
<div class="c" style="left:181.6px;width:38.3px;top:297.50px;"><span style="color:#246a4c;right:1.0px;transform:scaleX(0.938);transform-origin:100% 0;">630768</span></div>
<div class="c" style="left:220.4px;width:91.7px;top:297.50px;"><span style="right:1.0px;transform:scaleX(0.938);transform-origin:100% 0;">1731397.46</span></div>
<div class="c" style="left:312.6px;width:124.2px;top:297.50px;"><span style="right:1.0px;transform:scaleX(0.938);transform-origin:100% 0;">2933604.93</span></div>
<div class="c" style="left:437.3px;width:47.9px;top:297.50px;"><span style="right:1.0px;transform:scaleX(0.938);transform-origin:100% 0;">2</span></div>
<div class="c" style="left:16.5px;width:47.4px;top:309.17px;"><span style="left:1.5px;transform:scaleX(0.885);transform-origin:0 0;">Australia and</span></div>
<div class="c" style="left:64.4px;width:38.9px;top:309.17px;"><span style="left:1.9px;transform:scaleX(0.885);transform-origin:0 0;">Samoa</span></div>
<div class="c" style="left:103.8px;width:39.0px;top:309.17px;"><span style="right:1.0px;transform:scaleX(0.938);transform-origin:100% 0;">1257284</span></div>
<div class="c" style="left:143.3px;width:37.8px;top:309.17px;"><span style="right:1.0px;transform:scaleX(0.938);transform-origin:100% 0;">742080</span></div>
<div class="c" style="left:181.6px;width:38.3px;top:309.17px;"><span style="color:#246a4c;right:1.0px;transform:scaleX(0.938);transform-origin:100% 0;">515204</span></div>
<div class="c" style="left:220.4px;width:91.7px;top:309.17px;"><span style="right:1.0px;transform:scaleX(0.938);transform-origin:100% 0;">1731397.46</span></div>
<div class="c" style="left:312.6px;width:124.2px;top:309.17px;"><span style="right:1.0px;transform:scaleX(0.938);transform-origin:100% 0;">2933604.93</span></div>
<div class="c" style="left:437.3px;width:47.9px;top:309.17px;"><span style="right:1.0px;transform:scaleX(0.938);transform-origin:100% 0;">2</span></div>
<div class="c" style="left:16.5px;width:47.4px;top:320.84px;"><span style="left:1.5px;transform:scaleX(0.885);transform-origin:0 0;">Sub-Saharan</span></div>
<div class="c" style="left:64.4px;width:38.9px;top:320.84px;"><span style="left:1.9px;transform:scaleX(0.885);transform-origin:0 0;">Botswana</span></div>
<div class="c" style="left:103.8px;width:39.0px;top:320.84px;"><span style="right:1.0px;transform:scaleX(0.938);transform-origin:100% 0;">441190</span></div>
<div class="c" style="left:143.3px;width:37.8px;top:320.84px;"><span style="right:1.0px;transform:scaleX(0.938);transform-origin:100% 0;">295583</span></div>
<div class="c" style="left:181.6px;width:38.3px;top:320.84px;"><span style="color:#246a4c;right:1.0px;transform:scaleX(0.938);transform-origin:100% 0;">145607</span></div>
<div class="c" style="left:220.4px;width:91.7px;top:320.84px;"><span style="right:1.0px;transform:scaleX(0.938);transform-origin:100% 0;">1731397.46</span></div>
<div class="c" style="left:312.6px;width:124.2px;top:320.84px;"><span style="right:1.0px;transform:scaleX(0.938);transform-origin:100% 0;">2933604.93</span></div>
<div class="c" style="left:437.3px;width:47.9px;top:320.84px;"><span style="right:1.0px;transform:scaleX(0.938);transform-origin:100% 0;">2</span></div>
<div class="c" style="left:16.5px;width:47.4px;top:332.50px;"><span style="left:1.5px;transform:scaleX(0.885);transform-origin:0 0;">Middle East a</span></div>
<div class="c" style="left:64.4px;width:38.9px;top:332.50px;"><span style="left:1.9px;transform:scaleX(0.885);transform-origin:0 0;">Bahrain</span></div>
<div class="c" style="left:103.8px;width:39.0px;top:332.50px;"><span style="right:1.0px;transform:scaleX(0.938);transform-origin:100% 0;">3177905</span></div>
<div class="c" style="left:143.3px;width:37.8px;top:332.50px;"><span style="right:1.0px;transform:scaleX(0.938);transform-origin:100% 0;">2561805</span></div>
<div class="c" style="left:181.6px;width:38.3px;top:332.50px;"><span style="color:#246a4c;right:1.0px;transform:scaleX(0.938);transform-origin:100% 0;">616100</span></div>
<div class="c" style="left:220.4px;width:91.7px;top:332.50px;"><span style="right:1.0px;transform:scaleX(0.938);transform-origin:100% 0;">1731397.46</span></div>
<div class="c" style="left:312.6px;width:124.2px;top:332.50px;"><span style="right:1.0px;transform:scaleX(0.938);transform-origin:100% 0;">2933604.93</span></div>
<div class="c" style="left:437.3px;width:47.9px;top:332.50px;"><span style="right:1.0px;transform:scaleX(0.938);transform-origin:100% 0;">2</span></div>
<div class="c" style="left:16.5px;width:47.4px;top:344.17px;"><span style="left:1.5px;transform:scaleX(0.885);transform-origin:0 0;">Central America</span></div>
<div class="c" style="left:64.4px;width:38.9px;top:344.17px;"><span style="left:1.9px;transform:scaleX(0.885);transform-origin:0 0;">Saint Vincent</span></div>
<div class="c" style="left:103.8px;width:39.0px;top:344.17px;"><span style="right:1.0px;transform:scaleX(0.938);transform-origin:100% 0;">1464463</span></div>
<div class="c" style="left:143.3px;width:37.8px;top:344.17px;"><span style="right:1.0px;transform:scaleX(0.938);transform-origin:100% 0;">935229</span></div>
<div class="c" style="left:181.6px;width:38.3px;top:344.17px;"><span style="color:#246a4c;right:1.0px;transform:scaleX(0.938);transform-origin:100% 0;">529234</span></div>
<div class="c" style="left:220.4px;width:91.7px;top:344.17px;"><span style="right:1.0px;transform:scaleX(0.938);transform-origin:100% 0;">1731397.46</span></div>
<div class="c" style="left:312.6px;width:124.2px;top:344.17px;"><span style="right:1.0px;transform:scaleX(0.938);transform-origin:100% 0;">2933604.93</span></div>
<div class="c" style="left:437.3px;width:47.9px;top:344.17px;"><span style="right:1.0px;transform:scaleX(0.938);transform-origin:100% 0;">2</span></div>
<div class="c" style="left:16.5px;width:47.4px;top:355.84px;"><span style="left:1.5px;transform:scaleX(0.885);transform-origin:0 0;">Middle East a</span></div>
<div class="c" style="left:64.4px;width:38.9px;top:355.84px;"><span style="left:1.9px;transform:scaleX(0.885);transform-origin:0 0;">Pakistan</span></div>
<div class="c" style="left:103.8px;width:39.0px;top:355.84px;"><span style="right:1.0px;transform:scaleX(0.938);transform-origin:100% 0;">44929.3</span></div>
<div class="c" style="left:143.3px;width:37.8px;top:355.84px;"><span style="right:1.0px;transform:scaleX(0.938);transform-origin:100% 0;">28057.9</span></div>
<div class="c" style="left:181.6px;width:38.3px;top:355.84px;"><span style="color:#246a4c;right:1.0px;transform:scaleX(0.938);transform-origin:100% 0;">16871.4</span></div>
<div class="c" style="left:220.4px;width:91.7px;top:355.84px;"><span style="right:1.0px;transform:scaleX(0.938);transform-origin:100% 0;">1731397.46</span></div>
<div class="c" style="left:312.6px;width:124.2px;top:355.84px;"><span style="right:1.0px;transform:scaleX(0.938);transform-origin:100% 0;">2933604.93</span></div>
<div class="c" style="left:437.3px;width:47.9px;top:355.84px;"><span style="right:1.0px;transform:scaleX(0.938);transform-origin:100% 0;">2</span></div>
<div class="c" style="left:16.5px;width:47.4px;top:367.50px;"><span style="left:1.5px;transform:scaleX(0.885);transform-origin:0 0;">Europe</span></div>
<div class="c" style="left:64.4px;width:38.9px;top:367.50px;"><span style="left:1.9px;transform:scaleX(0.885);transform-origin:0 0;">Hungary</span></div>
<div class="c" style="left:103.8px;width:39.0px;top:367.50px;"><span style="right:1.0px;transform:scaleX(0.938);transform-origin:100% 0;">17556.5</span></div>
<div class="c" style="left:143.3px;width:37.8px;top:367.50px;"><span style="right:1.0px;transform:scaleX(0.938);transform-origin:100% 0;">11762.3</span></div>
<div class="c" style="left:181.6px;width:38.3px;top:367.50px;"><span style="color:#246a4c;right:1.0px;transform:scaleX(0.938);transform-origin:100% 0;">5794.2</span></div>
<div class="c" style="left:220.4px;width:91.7px;top:367.50px;"><span style="right:1.0px;transform:scaleX(0.938);transform-origin:100% 0;">1731397.46</span></div>
<div class="c" style="left:312.6px;width:124.2px;top:367.50px;"><span style="right:1.0px;transform:scaleX(0.938);transform-origin:100% 0;">2933604.93</span></div>
<div class="c" style="left:437.3px;width:47.9px;top:367.50px;"><span style="right:1.0px;transform:scaleX(0.938);transform-origin:100% 0;">2</span></div>
<div class="c" style="left:16.5px;width:47.4px;top:379.17px;"><span style="left:1.5px;transform:scaleX(0.885);transform-origin:0 0;">Europe</span></div>
<div class="c" style="left:64.4px;width:38.9px;top:379.17px;"><span style="left:1.9px;transform:scaleX(0.885);transform-origin:0 0;">Poland</span></div>
<div class="c" style="left:103.8px;width:39.0px;top:379.17px;"><span style="right:1.0px;transform:scaleX(0.938);transform-origin:100% 0;">1226795</span></div>
<div class="c" style="left:143.3px;width:37.8px;top:379.17px;"><span style="right:1.0px;transform:scaleX(0.938);transform-origin:100% 0;">698444</span></div>
<div class="c" style="left:181.6px;width:38.3px;top:379.17px;"><span style="color:#246a4c;right:1.0px;transform:scaleX(0.938);transform-origin:100% 0;">528351</span></div>
<div class="c" style="left:220.4px;width:91.7px;top:379.17px;"><span style="right:1.0px;transform:scaleX(0.938);transform-origin:100% 0;">1731397.46</span></div>
<div class="c" style="left:312.6px;width:124.2px;top:379.17px;"><span style="right:1.0px;transform:scaleX(0.938);transform-origin:100% 0;">2933604.93</span></div>
<div class="c" style="left:437.3px;width:47.9px;top:379.17px;"><span style="right:1.0px;transform:scaleX(0.938);transform-origin:100% 0;">3</span></div>
<div class="c" style="left:16.5px;width:47.4px;top:390.84px;"><span style="left:1.5px;transform:scaleX(0.885);transform-origin:0 0;">Middle East a</span></div>
<div class="c" style="left:64.4px;width:38.9px;top:390.84px;"><span style="left:1.9px;transform:scaleX(0.885);transform-origin:0 0;">Tunisia</span></div>
<div class="c" style="left:103.8px;width:39.0px;top:390.84px;"><span style="right:1.0px;transform:scaleX(0.938);transform-origin:100% 0;">6366880</span></div>
<div class="c" style="left:143.3px;width:37.8px;top:390.84px;"><span style="right:1.0px;transform:scaleX(0.938);transform-origin:100% 0;">5132534</span></div>
<div class="c" style="left:181.6px;width:38.3px;top:390.84px;"><span style="color:#246a4c;right:1.0px;transform:scaleX(0.938);transform-origin:100% 0;">1234346</span></div>
<div class="c" style="left:220.4px;width:91.7px;top:390.84px;"><span style="right:1.0px;transform:scaleX(0.938);transform-origin:100% 0;">1731397.46</span></div>
<div class="c" style="left:312.6px;width:124.2px;top:390.84px;"><span style="right:1.0px;transform:scaleX(0.938);transform-origin:100% 0;">2933604.93</span></div>
<div class="c" style="left:437.3px;width:47.9px;top:390.84px;"><span style="right:1.0px;transform:scaleX(0.938);transform-origin:100% 0;">3</span></div>
<div class="c" style="left:16.5px;width:47.4px;top:402.50px;"><span style="left:1.5px;transform:scaleX(0.885);transform-origin:0 0;">Europe</span></div>
<div class="c" style="left:64.4px;width:38.9px;top:402.50px;"><span style="left:1.9px;transform:scaleX(0.885);transform-origin:0 0;">Lithuania</span></div>
<div class="c" style="left:103.8px;width:39.0px;top:402.50px;"><span style="right:1.0px;transform:scaleX(0.938);transform-origin:100% 0;">62109.8</span></div>
<div class="c" style="left:143.3px;width:37.8px;top:402.50px;"><span style="right:1.0px;transform:scaleX(0.938);transform-origin:100% 0;">46066.4</span></div>
<div class="c" style="left:181.6px;width:38.3px;top:402.50px;"><span style="color:#246a4c;right:1.0px;transform:scaleX(0.938);transform-origin:100% 0;">16043.4</span></div>
<div class="c" style="left:220.4px;width:91.7px;top:402.50px;"><span style="right:1.0px;transform:scaleX(0.938);transform-origin:100% 0;">1731397.46</span></div>
<div class="c" style="left:312.6px;width:124.2px;top:402.50px;"><span style="right:1.0px;transform:scaleX(0.938);transform-origin:100% 0;">2933604.93</span></div>
<div class="c" style="left:437.3px;width:47.9px;top:402.50px;"><span style="right:1.0px;transform:scaleX(0.938);transform-origin:100% 0;">3</span></div>
<div class="abs" style="left:181.00px;top:203.47px;width:39.80px;height:12.67px;background:#fff;border:1.15px solid #207a50"></div>
<div class="c" style="left:181.6px;width:38.3px;top:204.17px;"><span style="color:#222;right:1.0px;transform:scaleX(0.938);transform-origin:100% 0;">236465</span></div>
<div class="abs" style="left:218.80px;top:214.03px;width:3.00px;height:3.00px;background:#207a50;border:0.4px solid #fff"></div>
</div>
<!-- ================= SCROLLBARS / SHEET TABS / STATUS ================= -->
<div id="bottom">
<div class="abs" style="left:787.50px;top:134.00px;width:12.50px;height:282.00px;background:#4b4b4b;"></div>
<div class="abs" style="left:788.40px;top:134.60px;width:12.00px;height:281.40px;background:#3c3c3c;border-radius:6px 6px 6px 6px"></div>
<svg class="abs" style="left:789.6px;top:136.2px" width="7.4" height="6.4" viewBox="0 0 7.4 6.4" ><polygon points="3.7,0.5 7,5.9 0.4,5.9" fill="#e8e8e8"/></svg>
<svg class="abs" style="left:790.6px;top:409px" width="6" height="4.6" viewBox="0 0 6 4.6" ><polygon points="3,4.2 5.7,0.4 0.3,0.4" fill="#e8e8e8"/></svg>
<div class="abs" style="left:791.00px;top:221.70px;width:3.60px;height:52.30px;background:#cdcdcd;border-radius:1.8px"></div>
<div class="abs" style="left:0.00px;top:415.80px;width:800.00px;height:19.60px;background:#434343;"></div>
<div class="abs" style="left:0.00px;top:414.20px;width:16.50px;height:1.60px;background:#434343;"></div>
<svg class="abs" style="left:13.4px;top:421.6px" width="6" height="8" viewBox="0 0 6 8" ><path d="M4.8 1 L1.2 4 L4.8 7" fill="none" stroke="#a6a6a6" stroke-width="0.9"/></svg>
<svg class="abs" style="left:33.4px;top:421.6px" width="6" height="8" viewBox="0 0 6 8" ><path d="M1.2 1 L4.8 4 L1.2 7" fill="none" stroke="#a6a6a6" stroke-width="0.9"/></svg>
<div class="abs" style="left:69.00px;top:415.80px;width:36.40px;height:17.20px;background:#fff;border-radius:0 0 3.5px 3.5px"></div>
<div class="t" style="left:74.40px;top:420.29px;font-size:8.4px;color:#2a2a2a;font-weight:bold;transform:scaleX(0.910);">Sheet1</div>
<div class="abs" style="left:74.00px;top:430.00px;width:26.00px;height:1.60px;background:#2e8b57;"></div>
<svg class="abs" style="left:133.5px;top:421.5px" width="8" height="8" viewBox="0 0 8 8" ><path d="M4 0.5 v7 M0.5 4 h7" fill="none" stroke="#c8c8c8" stroke-width="0.85"/></svg>
<div class="abs" style="left:481.50px;top:423.00px;width:1.10px;height:1.10px;background:#cdcdcd;"></div>
<div class="abs" style="left:481.50px;top:425.50px;width:1.10px;height:1.10px;background:#cdcdcd;"></div>
<div class="abs" style="left:481.50px;top:428.00px;width:1.10px;height:1.10px;background:#cdcdcd;"></div>
<div class="abs" style="left:492.00px;top:420.00px;width:295.00px;height:11.00px;background:#3a3a3a;border-radius:5.5px"></div>
<svg class="abs" style="left:495px;top:422.4px" width="5.4" height="6.6" viewBox="0 0 5.4 6.6" ><polygon points="0.4,3.3 5,0.3 5,6.3" fill="#e8e8e8"/></svg>
<svg class="abs" style="left:779.6px;top:422.4px" width="5.4" height="6.6" viewBox="0 0 5.4 6.6" ><polygon points="5,3.3 0.4,0.3 0.4,6.3" fill="#e8e8e8"/></svg>
<div class="abs" style="left:556.00px;top:422.80px;width:94.00px;height:5.20px;background:#cdcdcd;border-radius:2.6px"></div>
<div class="abs" style="left:0.00px;top:435.40px;width:800.00px;height:14.60px;background:#4b4b4b;"></div>
<div class="abs" style="left:0.00px;top:435.00px;width:800.00px;height:0.60px;background:#525252;"></div>
<div class="t" style="left:7.40px;top:439.07px;font-size:7px;color:#d8d8d8;transform:scaleX(0.850);">Ready</div>
<svg class="abs" style="left:37px;top:438.8px" width="8.4" height="9.4" viewBox="0 0 8.4 9.4" ><g fill="none" stroke="#e0e0e0" stroke-width="0.75"><circle cx="4" cy="1.4" r="0.9"/><path d="M0.8 3 l3.2 0.9 l3.2-0.9 M4 3.9 v1.8 M4 5.6 l-1.8 2.8 M4 5.6 l1 1.4"/><path d="M5.4 6.4 l2.6 2.6 M8 6.4 l-2.6 2.6" stroke-width="0.7"/></g></svg>
<div class="t" style="left:48.00px;top:439.07px;font-size:7px;color:#ececec;font-weight:bold;transform:scaleX(0.932);">Accessibility: Investigate</div>
<div class="abs" style="left:614.00px;top:436.00px;width:24.00px;height:14.00px;background:#595959;"></div>
<svg class="abs" style="left:621.4px;top:438.4px" width="9.2" height="8.6" viewBox="0 0 9.2 8.6" ><g fill="none" stroke="#ededed" stroke-width="0.75"><rect x="0.5" y="0.5" width="8.2" height="7.6"/><path d="M3.2 0.5 v7.6 M6 0.5 v7.6 M0.5 3 h8.2 M0.5 5.6 h8.2"/></g></svg>
<svg class="abs" style="left:647px;top:438.4px" width="9.4" height="8.6" viewBox="0 0 9.4 8.6" ><g fill="none" stroke="#ededed" stroke-width="0.8"><rect x="0.5" y="0.5" width="8.4" height="7.6"/><path d="M3.2 1.8 v5 M6.2 1.8 v5"/></g></svg>
<svg class="abs" style="left:672px;top:438.4px" width="9.4" height="8.6" viewBox="0 0 9.4 8.6" ><g fill="none" stroke="#ededed" stroke-width="0.8"><rect x="0.5" y="0.5" width="8.4" height="7.6"/><path d="M3 0.5 v3.6 h3.4 v-3.6" stroke-width="1"/></g></svg>
<div class="abs" style="left:693.00px;top:442.60px;width:4.00px;height:0.80px;background:#cfcfcf;"></div>
<div class="abs" style="left:701.00px;top:442.60px;width:61.40px;height:0.80px;background:#a6a6a6;"></div>
<div class="abs" style="left:729.40px;top:438.60px;width:3.00px;height:7.60px;background:#e2e2e2;border-radius:0.6px"></div>
<svg class="abs" style="left:765.4px;top:440.4px" width="5.2" height="5.2" viewBox="0 0 5.2 5.2" ><path d="M2.6 0.3 v4.6 M0.3 2.6 h4.6" fill="none" stroke="#cfcfcf" stroke-width="0.8"/></svg>
<div class="t" style="left:778.40px;top:438.91px;font-size:7.2px;color:#f2f2f2;transform:scaleX(0.848);">97%</div>
<svg class="abs" style="left:705px;top:393px" width="85" height="46" viewBox="0 0 85 46">
<polygon points="19.4,4.2 81.2,4.2 81.2,28.4 68,41.6 4.2,41.6 4.2,18" fill="#cf2a24" fill-opacity="0.6"/>
<polygon points="81.2,32.8 81.2,41.6 72.4,41.6" fill="#cf2a24" fill-opacity="0.6"/>
<text x="19.6" y="29" font-family="Liberation Sans, sans-serif" font-size="19.4" fill="#fbeceb" fill-opacity="0.96" textLength="45" lengthAdjust="spacingAndGlyphs">MUO</text>
</svg>
</div>
</body>
</html>
